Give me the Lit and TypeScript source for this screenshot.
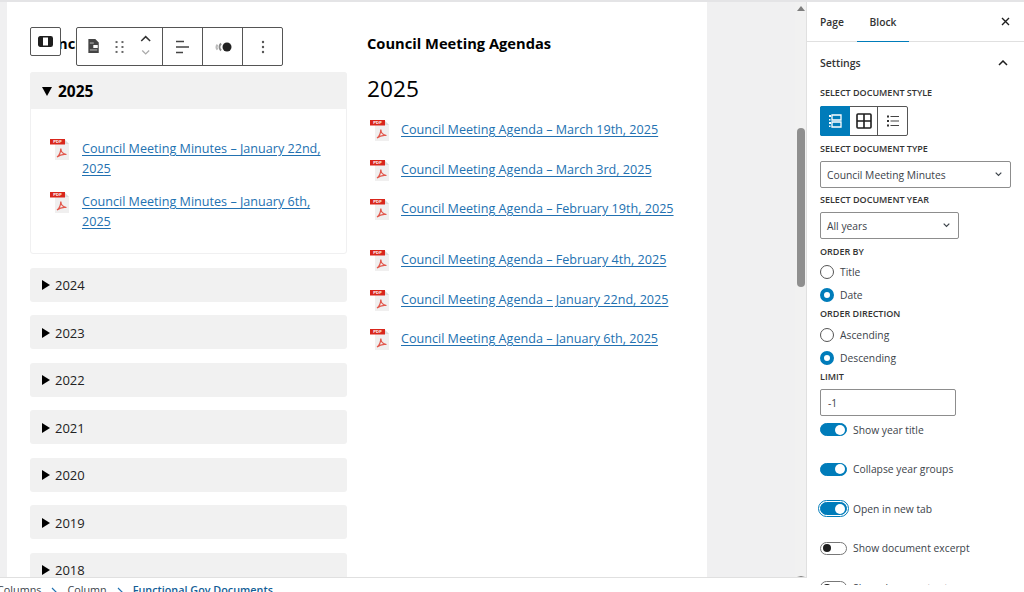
import { LitElement, html, css, svg } from "lit";
import { customElement } from "lit/decorators.js";

const pdf = html`<svg class="pdf" viewBox="0 0 20 21" width="20" height="21">
  <path d="M5 0h9l5 5v16H5z" fill="#f0efef"/><path d="M14 0l5 5h-5z" fill="#dcdcdc"/>
  <rect x="0" y="0" width="15" height="5.500" fill="#d9261c"/>
  <text x="7.500" y="4.400" font-size="4.200" font-weight="700" fill="#fff" text-anchor="middle" font-family="Liberation Sans">PDF</text>
  <path d="M7 18c2.500-1.600 3.600-4.500 3.800-8.500C11 13 13 15 16.500 15.500c-3.200-.5-6.500.1-9.500 2.500z" fill="none" stroke="#e2574c" stroke-width="1.200"/>
</svg>`;

const minutes = ["Council Meeting Minutes – January 22nd, 2025", "Council Meeting Minutes – January 6th, 2025"];
const agendas = [
  ["Council Meeting Agenda – March 19th, 2025", ""],
  ["Council Meeting Agenda – March 3rd, 2025", ""],
  ["Council Meeting Agenda – February 19th, 2025", "brk"],
  ["Council Meeting Agenda – February 4th, 2025", ""],
  ["Council Meeting Agenda – January 22nd, 2025", ""],
  ["Council Meeting Agenda – January 6th, 2025", ""],
];
const years = ["2024", "2023", "2022", "2021", "2020", "2019", "2018"];
const toggles = [
  ["Show year title", "on"],
  ["Collapse year groups", "on"],
  ["Open in new tab", "on focus"],
  ["Show document excerpt", ""],
  ["Show document category", ""],
];

@customElement("app-root")
export class AppRoot extends LitElement {
  static styles = css`
    :host { display: block; width: 1024px; height: 592px; overflow: hidden; position: relative; background: #fff;
      font-family: "Open Sans", "Noto Sans", sans-serif; color: #1e1e1e; }
    * { box-sizing: border-box; }
    .page { display: flex; height: 592px; border-top: 2px solid #e4e4e6; }
    .left { width: 807px; flex: none; display: flex; flex-direction: column; }
    .main { flex: 1; min-height: 0; display: flex; }
    .editor { width: 795px; padding-left: 7px; background: #f0f0f1; overflow: hidden; flex: none; }
    .canvas { width: 700px; height: 100%; background: #fff; display: flex; gap: 20px; padding: 0 23px; position: relative; overflow: hidden; }
    .col-l { width: 317px; flex: none; }
    .col-r { width: 320px; flex: none; }
    h2 { margin: 0; font-size: 14.700px; line-height: 20px; font-weight: 700; color: #000; padding-top: 31px; }
    .open { margin-top: 19px; border: 1px solid #f0f0f1; border-radius: 3px; height: 182px; }
    .sum { background: #f1f1f1; display: flex; align-items: center; padding: 1px 0 0 12px; color: #222; font-size: 13px; }
    .open .sum { height: 37px; margin: -1px -1px 0; border-radius: 3px 3px 0 0; font-size: 15.500px; font-weight: 700; color: #000; gap: 6px; padding-top: 1px; }
    .tri { width: 0; height: 0; border-style: solid; border-color: transparent transparent transparent #000; border-width: 5px 0 5px 8px; margin-right: 5px; }
    .tri.down { border-width: 9px 5px 0; border-color: #000 transparent transparent; margin-right: 0; }
    .year { height: 34px; margin-top: 13.500px; border-radius: 3px; }
    .open .list { padding: 30px 10px 0 19px; display: flex; flex-direction: column; gap: 13px; }
    .doc { display: flex; gap: 12px; font-size: 12.600px; line-height: 20px; align-items: flex-start; }
    .doc a { color: #2271b1; text-decoration: underline; text-underline-offset: 2px; }
    .doc .pdf { flex: none; }
    .col-l .doc a { width: 245px; }
    .h1 { font-size: 22.700px; line-height: 32px; color: #000; margin-top: 20px; }
    .rlist { margin-top: 15px; padding-left: 3px; display: flex; flex-direction: column; }
    .rlist .doc { height: 39.500px; gap: 11px; }
    .rlist .doc.brk { height: 51px; }
    .toolbar-side { position: absolute; left: 23px; top: 25px; width: 31px; height: 29px; background: #fff; border: 1px solid #555; border-radius: 2px; display: flex; align-items: center; justify-content: center; }
    .toolbar { position: absolute; left: 69px; top: 25px; height: 39px; width: 207px; background: #fff; border: 1px solid #555; border-radius: 2px; display: flex; }
    .tb { display: flex; align-items: center; justify-content: center; border-right: 1px solid #555; height: 100%; }
    .tb:last-child { border-right: 0; }
    .tb.a { width: 86px; } .tb.b { width: 40px; }
    .tb.c { width: 40px; } .tb.d { flex: 1; }
    .scroll { width: 12px; flex: none; background: #f1f1f1; position: relative; border-right: 1px solid #e0e0e0; }
    .thumb { position: absolute; left: 2px; top: 126px; width: 8px; height: 159px; background: #8f8f8f; border-radius: 4px; }
    .arr { position: absolute; left: 2px; width: 0; height: 0; border-style: solid; border-color: transparent; }
    .arr.u { top: 4px; border-width: 0 4px 5px; border-bottom-color: #7e7e7e; }
    .arr.dn { bottom: 0; border-width: 0 4px 1px; border-bottom-color: #7e7e7e; }
    .side { flex: 1; height: 583px; position: relative; overflow: hidden; font-size: 10.300px; color: #3c434a; background: #fff; }
    .tabs { height: 40px; display: flex; border-bottom: 1px solid #e0e0e0; padding-left: 13px; font-size: 10.300px; font-weight: 600; align-items: stretch; position: relative; }
    .tab { display: flex; align-items: center; color: #333; }
    .tab.page-t { width: 37px; }
    .tab.block { width: 52px; justify-content: center; border-bottom: 1.500px solid #007cba; height: 40px; }
    .x { position: absolute; right: 13px; top: 14px; }
    .body { padding: 0 13px; }
    .title-row { display: flex; justify-content: space-between; align-items: center; height: 42px; font-size: 10.500px; font-weight: 600; color: #333; padding-right: 3px; }
    .lbl { font-size: 9px; line-height: 12px; font-weight: 600; text-transform: uppercase; color: #333; }
    .lbl.first { margin-top: 3px; }
    .group { display: flex; width: 88px; height: 30px; margin-top: 7px; border: 1px solid #555; border-radius: 2px; }
    .group div { display: flex; align-items: center; justify-content: center; border-right: 1px solid #555; width: 28px; }
    .group div:first-child { background: #007cba; width: 30px; margin: -1px 0 -1px -1px; height: 30px; border-right: 0; border-radius: 2px 0 0 2px; }
    .group div:last-child { border-right: 0; flex: 1; }
    .sel { border: 1px solid #8d8d8d; border-radius: 2px; background: #fff; height: 27px; display: flex; align-items: center; justify-content: space-between; padding: 0 8px 0 6px; font-size: 10.300px; color: #3c434a; }
    .sel.type { margin-top: 6px; width: 191px; }
    .sel.yr { margin-top: 6px; width: 139px; }
    .mt7 { margin-top: 7px; } .mt6 { margin-top: 6px; } .mt2 { margin-top: 2px; }
    .radio { display: flex; align-items: center; gap: 6px; height: 23px; font-size: 10.300px; }
    .radio.r1 { margin-top: 2px; } .radio.r2 { margin-top: 3px; }
    .rd { width: 14px; height: 14px; border-radius: 50%; border: 1px solid #555; background: #fff; flex: none; }
    .rd.on { border: 4px solid #007cba; }
    .inp { width: 136px; height: 27px; border: 1px solid #8d8d8d; border-radius: 2px; display: flex; align-items: center; padding-left: 7px; font-size: 10.300px; margin-top: 6px; }
    .tg-list { margin-top: 7px; display: flex; flex-direction: column; gap: 26px; }
    .tg { display: flex; align-items: center; gap: 6px; height: 13.500px; font-size: 10.300px; }
    .sw { width: 27px; height: 13px; border-radius: 7px; border: 1px solid #777; position: relative; background: #fff; flex: none; }
    .sw::after { content: ""; position: absolute; left: 2px; top: 1.500px; width: 8px; height: 8px; border-radius: 50%; background: #1e1e1e; }
    .sw.on { background: #007cba; border-color: #007cba; }
    .sw.on::after { left: auto; right: 1px; top: .500px; width: 10px; height: 10px; background: #fff; }
    .sw.focus { outline: 1.500px solid #007cba; outline-offset: 1.500px; }
    .crumbs { height: 15px; flex: none; background: #fff; border-top: 1px solid #e0e0e0; display: flex; align-items: flex-start; gap: 10px; font-size: 10.800px; line-height: 24px; margin-left: -3px; color: #3c434a; overflow: hidden; }
    .crumbs b { font-weight: 600; color: #135e96; }
    .crumbs svg { margin-top: 9px; flex: none; }
  `;

  render() {
    const chev = html`<svg width="7" height="5" viewBox="0 0 7 5"><path d="M.7 .7l2.800 2.800L6.300 .7" fill="none" stroke="#3c434a" stroke-width="1.200"/></svg>`;
    const sep = html`<svg width="6" height="10" viewBox="0 0 6 10"><path d="M1 1l4 4-4 4" fill="none" stroke="#2271b1" stroke-width="1.200"/></svg>`;
    return html`<div class="page">
      <div class="left">
      <div class="main">
        <div class="editor"><div class="canvas">
          <div class="col-l">
            <h2>Council Meeting Minutes</h2>
            <div class="open">
              <div class="sum"><span class="tri down"></span>2025</div>
              <div class="list">${minutes.map((m) => html`<div class="doc">${pdf}<a>${m}</a></div>`)}</div>
            </div>
            ${years.map((y) => html`<div class="sum year"><span class="tri"></span>${y}</div>`)}
          </div>
          <div class="col-r">
            <h2>Council Meeting Agendas</h2>
            <div class="h1">2025</div>
            <div class="rlist">${agendas.map(([a, c]) => html`<div class="doc ${c}">${pdf}<a>${a}</a></div>`)}</div>
          </div>
          <div class="toolbar-side">
            <svg width="15" height="11" viewBox="0 0 15 11"><rect x=".7" y=".7" width="13.600" height="9.600" rx="1.500" fill="none" stroke="#1e1e1e" stroke-width="1.400"/><rect x="1" y="1" width="4" height="9" fill="#1e1e1e"/><rect x="10" y="1" width="4" height="9" fill="#1e1e1e"/></svg>
          </div>
          <div class="toolbar">
            <div class="tb a">
              <svg width="86" height="37" viewBox="0 0 86 37">
                <path d="M11.500 11h7l3.500 3.500V25H11.500z" fill="#444"/><path d="M13 15h4M13 22h7.500" stroke="#ddd" stroke-width=".8"/><rect x="16.500" y="17" width="4.500" height="3" fill="#fff"/>
                ${[39, 45].flatMap((x) => [13, 18, 23].map((y) => svg`<rect x=${x} y=${y} width="2" height="2" fill="#666"/>`))}
                <path d="M65 13l4.500-4.500L74 13" fill="none" stroke="#333" stroke-width="1.500"/>
                <path d="M66 22.500l3.500 3.500 3.500-3.500" fill="none" stroke="#aaa" stroke-width="1.300"/>
              </svg>
            </div>
            <div class="tb b"><svg width="15" height="14" viewBox="0 0 15 14"><path d="M1 1.500h8M1 7h13M1 12.500h7" stroke="#444" stroke-width="1.500"/></svg></div>
            <div class="tb c"><svg width="18" height="10" viewBox="0 0 18 10"><circle cx="13" cy="5" r="4.500" fill="#222"/><path d="M7 1.500a5 5 0 0 0 0 7" fill="none" stroke="#888" stroke-width="2"/><path d="M3.500 2.500a4 4 0 0 0 0 5" fill="none" stroke="#bbb" stroke-width="2"/></svg></div>
            <div class="tb d"><svg width="4" height="14" viewBox="0 0 4 14"><circle cx="2" cy="2" r="1.200" fill="#555"/><circle cx="2" cy="7" r="1.200" fill="#555"/><circle cx="2" cy="12" r="1.200" fill="#555"/></svg></div>
          </div>
        </div></div>
        <div class="scroll"><span class="arr u"></span><div class="thumb"></div><span class="arr dn"></span></div>
      </div>
      <div class="crumbs"><span>Columns</span>${sep}<span>Column</span>${sep}<b>Functional Gov Documents</b></div>
      </div>
      <div class="side">
        <div class="tabs"><div class="tab page-t">Page</div><div class="tab block">Block</div>
          <svg class="x" width="11" height="11" viewBox="0 0 11 11"><path d="M2 2l7 7M9 2l-7 7" stroke="#1e1e1e" stroke-width="1.400"/></svg></div>
        <div class="body">
          <div class="title-row">Settings<svg width="10" height="6" viewBox="0 0 10 6"><path d="M1 5l4-4 4 4" fill="none" stroke="#1e1e1e" stroke-width="1.500"/></svg></div>
          <div class="lbl first">Select document style</div>
          <div class="group">
            <div><svg width="14" height="14" viewBox="0 0 14 14"><path d="M4 1h9v5H4zM4 8h9v5H4z" fill="none" stroke="#fff" stroke-width="1.300"/><path d="M1 1h2v2H1zM1 5h1.500v1.500H1zM1 8h2v2H1zM1 11.500h1.500V13H1z" fill="#fff"/></svg></div>
            <div><svg width="16" height="16" viewBox="0 0 16 16"><rect x="1" y="1" width="14" height="14" rx="1" fill="none" stroke="#1e1e1e" stroke-width="1.600"/><path d="M8 1v14M1 8h14" stroke="#1e1e1e" stroke-width="1.600"/></svg></div>
            <div><svg width="12" height="12" viewBox="0 0 12 12"><path d="M3.500 1.500H12M3.500 6H12M3.500 10.500H12" stroke="#444" stroke-width="1.100"/><path d="M0 .500h2v2H0zM0 5h2v2H0zM0 9.500h2v2H0z" fill="#333"/></svg></div>
          </div>
          <div class="lbl mt7">Select document type</div>
          <div class="sel type">Council Meeting Minutes${chev}</div>
          <div class="lbl mt6">Select document year</div>
          <div class="sel yr">All years${chev}</div>
          <div class="lbl mt7">Order by</div>
          <div class="radio r1"><span class="rd"></span>Title</div>
          <div class="radio"><span class="rd on"></span>Date</div>
          <div class="lbl mt2">Order direction</div>
          <div class="radio r2"><span class="rd"></span>Ascending</div>
          <div class="radio"><span class="rd on"></span>Descending</div>
          <div class="lbl mt2">Limit</div>
          <div class="inp">-1</div>
          <div class="tg-list">${toggles.map(([t, c]) => html`<div class="tg"><span class="sw ${c}"></span>${t}</div>`)}</div>
        </div>
      </div>
    </div>`;
  }
}
